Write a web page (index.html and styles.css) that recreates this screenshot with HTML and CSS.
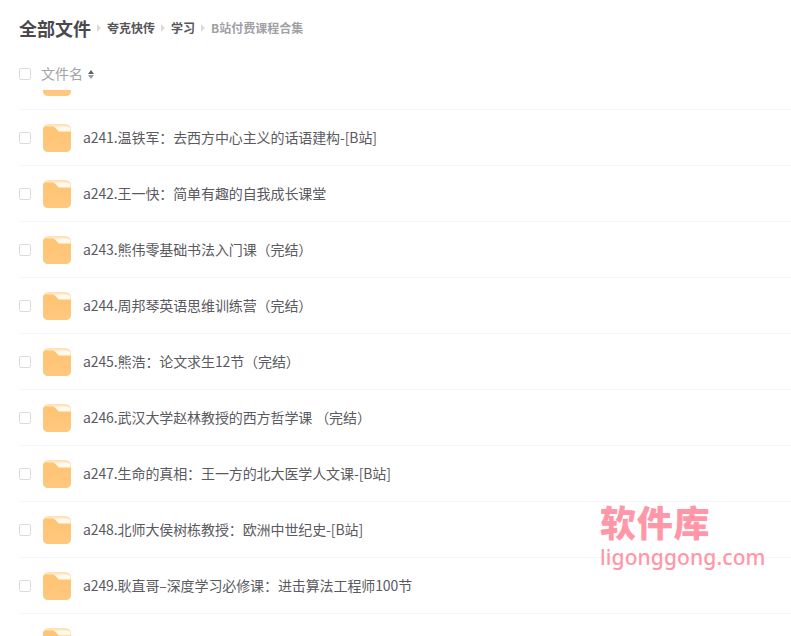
FILE: index.html
```html
<!DOCTYPE html>
<html lang="zh">
<head>
<meta charset="utf-8">
<title>全部文件</title>
<link rel="stylesheet" href="styles.css">
</head>
<body>
<svg class="defs" width="0" height="0" aria-hidden="true">
  <defs>
    <linearGradient id="fbody" x1="0" y1="0" x2="0" y2="1">
      <stop offset="0" stop-color="#ffc472"/>
      <stop offset="1" stop-color="#ffc87f"/>
    </linearGradient>
  </defs>
  <symbol id="folder" viewBox="0 0 28 28">
    <rect width="28" height="28" rx="5.5" fill="#ffe2b6"/>
    <path d="M3 5 Q3 2.5 6 2.5 L24 2.5 Q27 2.5 27 5 L27 8 L3 8 Z" fill="#fff9ee"/>
    <path d="M0 6 Q0 2.5 3.5 2.5 L9.5 2.5 Q11 2.5 12 3.5 L15.5 7.2 Q16 7.6 17 7.6 L28 7.6 L28 22.5 Q28 28 22.5 28 L5.5 28 Q0 28 0 22.5 Z" fill="url(#fbody)"/>
  </symbol>
</svg>
<main class="page">
  <header class="crumbs">
    <h1 class="crumb-root">全部文件</h1>
    <span class="sep"></span><span class="crumb">夸克快传</span>
    <span class="sep"></span><span class="crumb">学习</span>
    <span class="sep"></span><span class="crumb crumb-current">B站付费课程合集</span>
  </header>
  <div class="list-head">
    <span class="check"></span>
    <span class="head-name">文件名</span>
    <span class="sort"><i class="up"></i><i class="down"></i></span>
  </div>
  <div class="list">
    <div class="row row-top"><span class="cut"><svg class="folder"><use href="#folder"/></svg></span></div>
    <div class="row"><span class="check"></span><svg class="folder"><use href="#folder"/></svg><span class="name">a241.温铁军：去西方中心主义的话语建构-[B站]</span></div>
    <div class="row"><span class="check"></span><svg class="folder"><use href="#folder"/></svg><span class="name">a242.王一快：简单有趣的自我成长课堂</span></div>
    <div class="row"><span class="check"></span><svg class="folder"><use href="#folder"/></svg><span class="name">a243.熊伟零基础书法入门课（完结）</span></div>
    <div class="row"><span class="check"></span><svg class="folder"><use href="#folder"/></svg><span class="name">a244.周邦琴英语思维训练营（完结）</span></div>
    <div class="row"><span class="check"></span><svg class="folder"><use href="#folder"/></svg><span class="name">a245.熊浩：论文求生12节（完结）</span></div>
    <div class="row"><span class="check"></span><svg class="folder"><use href="#folder"/></svg><span class="name">a246.武汉大学赵林教授的西方哲学课 （完结）</span></div>
    <div class="row"><span class="check"></span><svg class="folder"><use href="#folder"/></svg><span class="name">a247.生命的真相：王一方的北大医学人文课-[B站]</span></div>
    <div class="row"><span class="check"></span><svg class="folder"><use href="#folder"/></svg><span class="name">a248.北师大侯树栋教授：欧洲中世纪史-[B站]</span></div>
    <div class="row"><span class="check"></span><svg class="folder"><use href="#folder"/></svg><span class="name">a249.耿直哥–深度学习必修课：进击算法工程师100节</span></div>
    <div class="row"><span class="check hidden"></span><svg class="folder"><use href="#folder"/></svg></div>
  </div>
  <div class="mark">
    <div class="mark-cn">软件库</div>
    <div class="mark-en">ligonggong.com</div>
  </div>
</main>
</body>
</html>
```
FILE: styles.css
```css
* { box-sizing: border-box; }
html, body { margin: 0; height: 100%; background: #fff; overflow: hidden; }
body { font-family: "Noto Sans CJK SC", "Liberation Sans", sans-serif; color: #4a4a4f; }
.defs { position: absolute; }
.page { height: 636px; padding-left: 19px; overflow: hidden; position: relative; }

.crumbs { display: flex; align-items: center; height: 20px; margin-top: 18px; }
.crumb-root { margin: 0; font-size: 18px; font-weight: 700; line-height: 20px; color: #48484d; }
.crumb { font-size: 12px; font-weight: 700; line-height: 20px; color: #55555a; }
.crumb-current { color: #a0a0a5; }
.sep { width: 0; height: 0; margin: 0 6px; border-left: 4px solid #dcdcdf; border-top: 4px solid transparent; border-bottom: 4px solid transparent; }

.list-head { display: flex; align-items: center; height: 24px; margin-top: 24px; }
.head-name { margin-left: 10px; padding-bottom: 2px; font-size: 14px; color: #a3a3a8; line-height: 20px; }
.sort { display: flex; flex-direction: column; gap: 1px; margin-left: 5px; }
.up, .down { width: 0; height: 0; border-left: 3.5px solid transparent; border-right: 3.5px solid transparent; }
.up { border-bottom: 4.5px solid #5f5f64; }
.down { border-top: 4.5px solid #9a9a9f; }

.check { width: 12px; height: 12px; flex: none; border: 1px solid #dcdcdf; border-radius: 2px; background: #fff; }
.hidden { visibility: hidden; }

.list { margin-top: 4px; }
.row { display: flex; align-items: center; height: 56px; border-bottom: 1px solid #f5f5f6; }
.row-top { height: 20px; align-items: flex-start; }
.cut { display: block; height: 6px; margin-left: 24px; overflow: hidden; }
.cut .folder { display: block; margin: -22px 0 0; }
.folder { width: 28px; height: 28px; flex: none; margin-left: 12px; }
.name { margin-left: 12px; padding-bottom: 2px; font-size: 14px; line-height: 20px; color: #5a5a5f; white-space: nowrap; letter-spacing: -.1px; }

.mark { position: absolute; left: 600px; top: 500px; color: #ff97a8; }
.mark-cn { font-size: 36px; font-weight: 900; line-height: 42px; letter-spacing: .8px; }
.mark-en { font-family: "Noto Sans", sans-serif; font-size: 21px; font-weight: 500; line-height: 30px; letter-spacing: .1px; }
```
